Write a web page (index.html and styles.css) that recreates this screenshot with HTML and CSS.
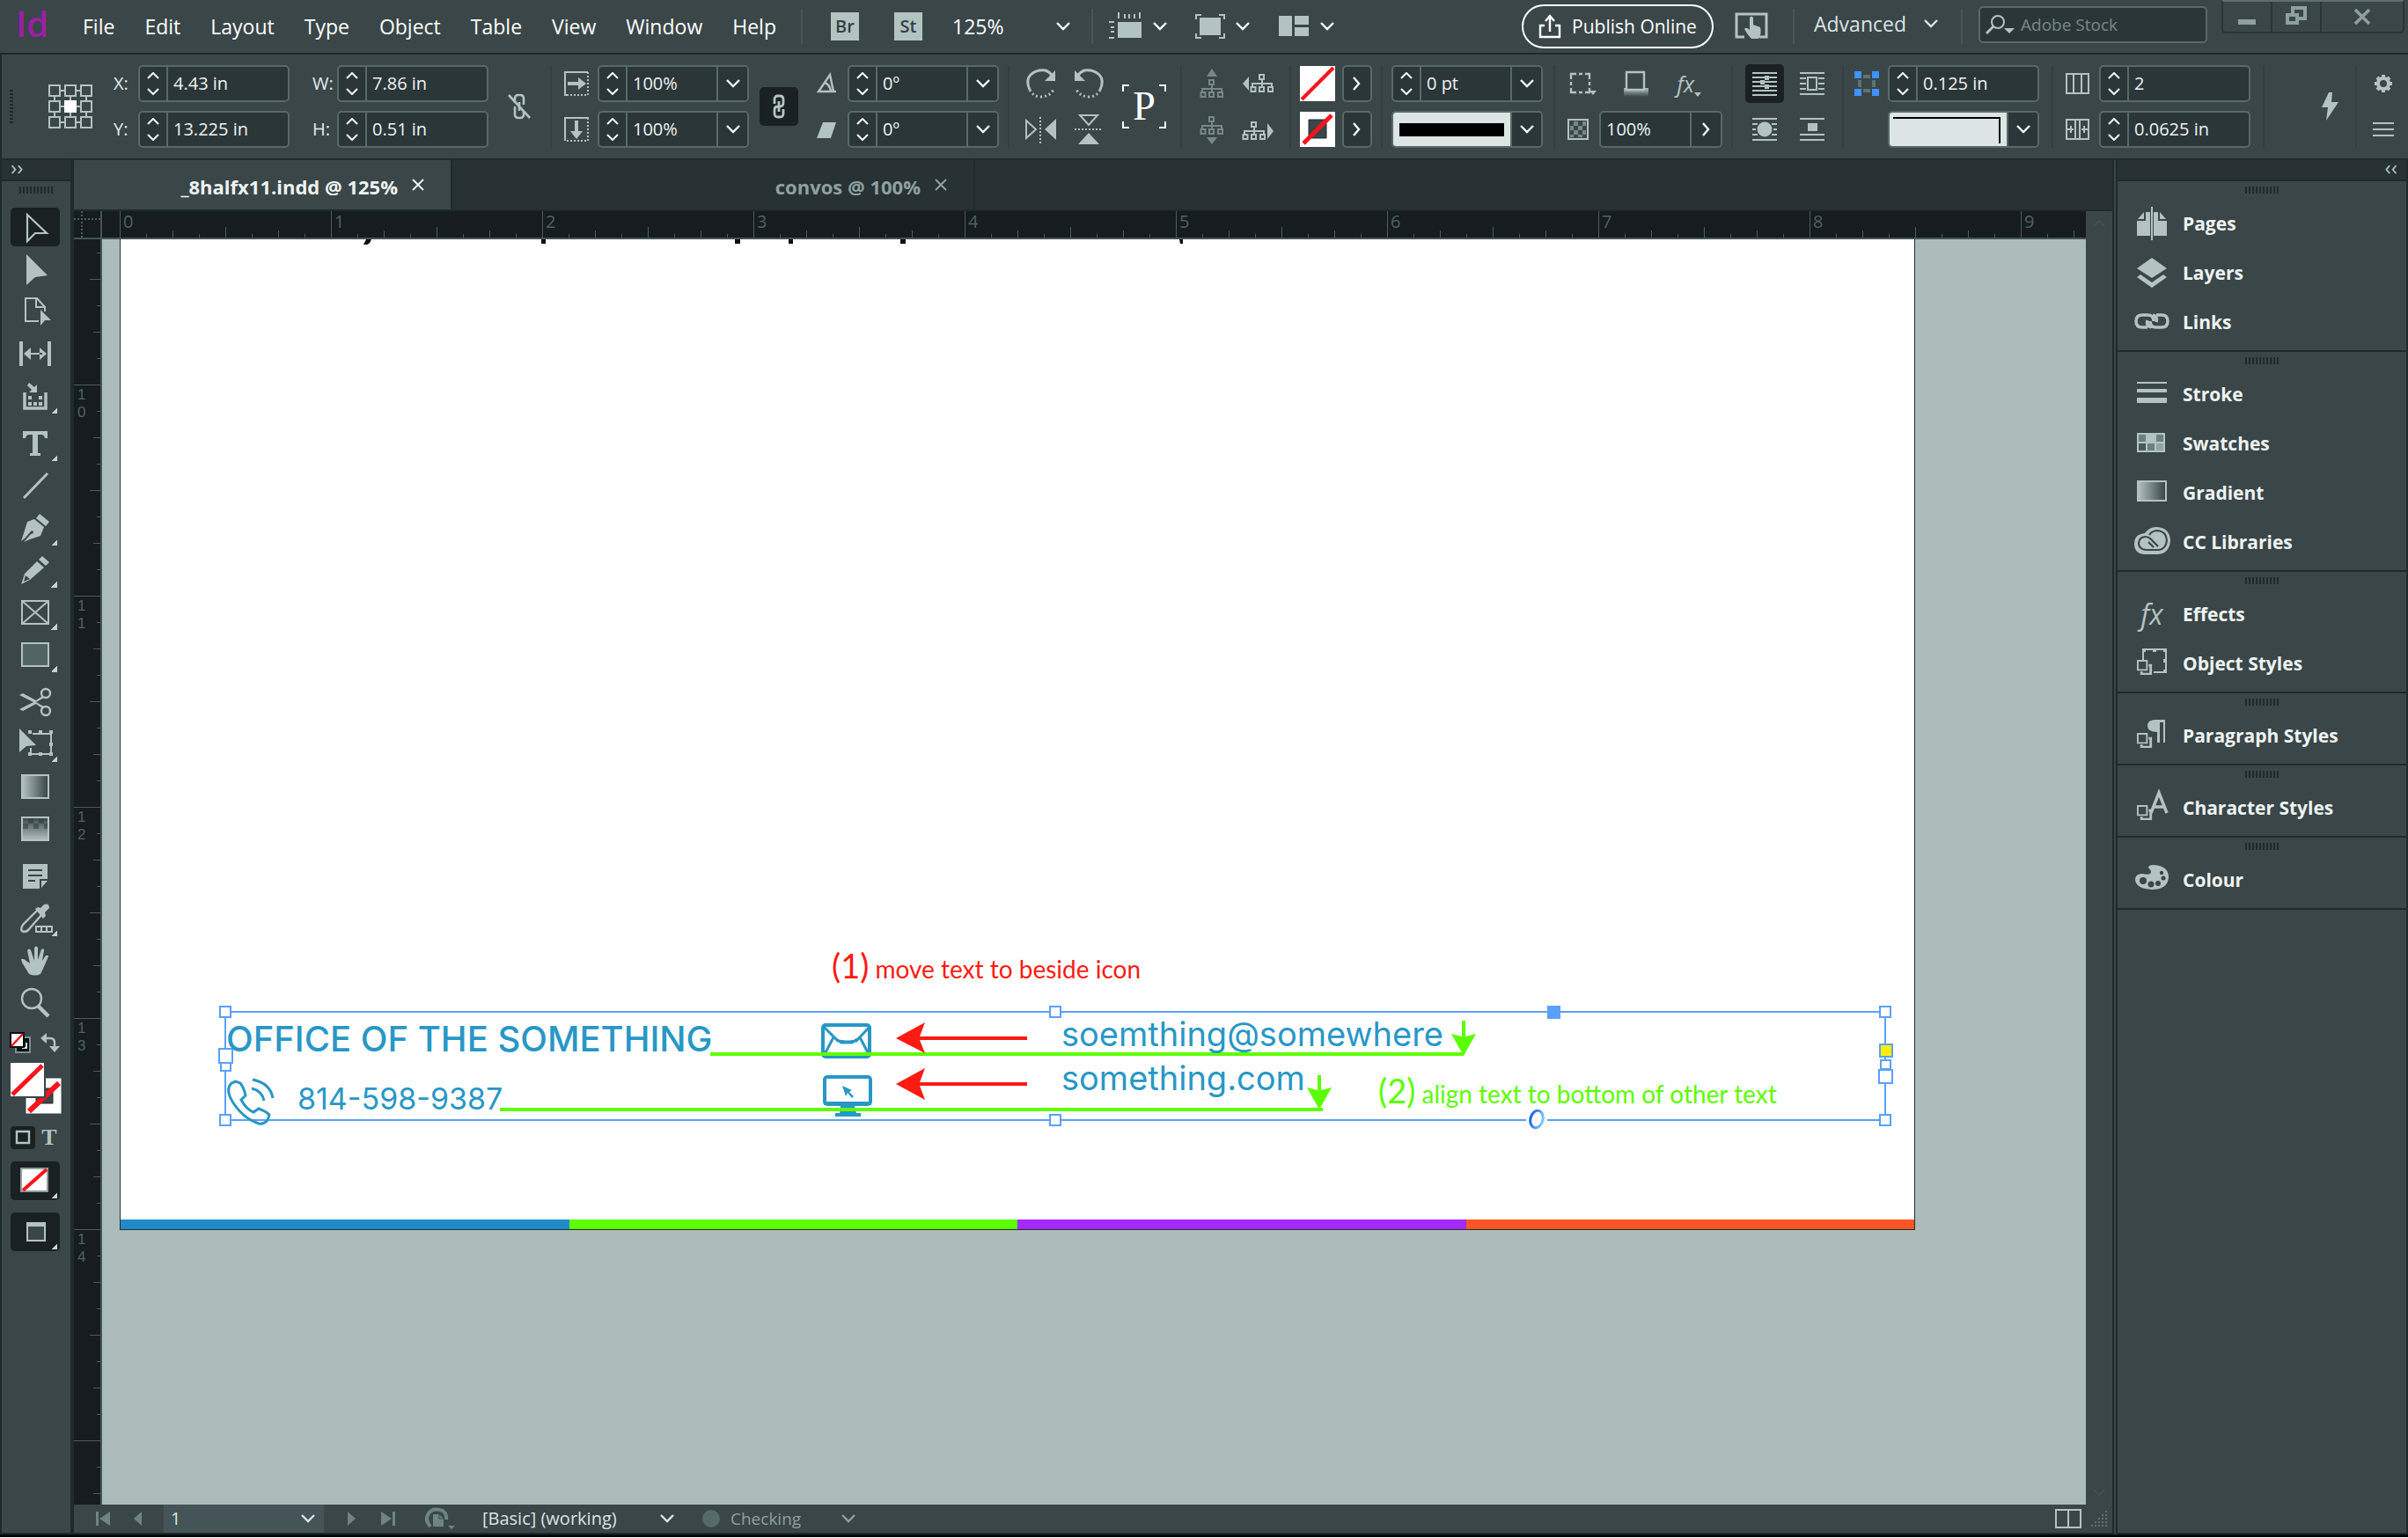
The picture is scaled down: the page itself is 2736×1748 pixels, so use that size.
FILE: index.html
```html
<!DOCTYPE html>
<html lang="en">
<head>
<meta charset="utf-8">
<title>_8halfx11.indd @ 125%</title>
<link rel="stylesheet" href="styles.css">
</head>
<body>
<svg class="defs" aria-hidden="true">
  <defs>
    <symbol id="up" viewBox="0 0 14 8"><path d="M1 7l6-6 6 6" fill="none" stroke="currentColor" stroke-width="2"/></symbol>
    <symbol id="down" viewBox="0 0 14 8"><path d="M1 1l6 6 6-6" fill="none" stroke="currentColor" stroke-width="2"/></symbol>
    <symbol id="chev" viewBox="0 0 16 10"><path d="M1 1l7 7 7-7" fill="none" stroke="currentColor" stroke-width="2.4"/></symbol>
    <symbol id="right" viewBox="0 0 10 16"><path d="M1 1l6 7-6 7" fill="none" stroke="currentColor" stroke-width="2.4"/></symbol>
    <symbol id="styles" viewBox="0 0 20 20"><path d="M1 1h11v11H1z" fill="none" stroke="currentColor" stroke-width="2"/><path d="M14 5h4v13H4v-4h3v1.500h8V8h-1z" fill="currentColor"/></symbol>
    <symbol id="tree" viewBox="0 0 28 22"><path d="M14 6v4M14 10v5M3 15v-4h22v4" fill="none" stroke="currentColor" stroke-width="2"/><path d="M11 1h5v5h-5zM1.500 15h5v5h-5zM11 15h5v5h-5zM21 15h5v5h-5z" fill="none" stroke="currentColor" stroke-width="2"/></symbol>
    <linearGradient id="fade"><stop offset="0" stop-color="#b3c3c1"/><stop offset="1" stop-color="#364345"/></linearGradient>
    <linearGradient id="fadeDown" x2="0" y2="1"><stop offset="0" stop-color="#3a4648"/><stop offset="1" stop-color="#b3c3c1"/></linearGradient>
    <linearGradient id="shadow" x2="0" y2="1"><stop offset="0" stop-color="#b3c3c1"/><stop offset="1" stop-color="#3a4648"/></linearGradient>
    <linearGradient id="ring"><stop offset="0" stop-color="#1b62f0"/><stop offset="1" stop-color="#7cc4fb"/></linearGradient>
  </defs>
</svg>

<header class="menubar">
  <span class="logo">Id</span>
  <nav class="menus">
    <button>File</button><button>Edit</button><button>Layout</button><button>Type</button><button>Object</button><button>Table</button><button>View</button><button>Window</button><button>Help</button>
  </nav>
  <i class="rule m-rule1"></i>
  <button class="badge">Br</button>
  <button class="badge">St</button>
  <button class="zoom"><span>125%</span><svg width="16" height="10"><use href="#chev"/></svg></button>
  <i class="rule m-rule2"></i>
  <div class="views">
    <button aria-label="View options"><svg width="38" height="32" viewBox="0 0 38 32"><path d="M11 0v7M18 2v5M23 2v5M29 2v5M35 0v7M0 11h6M2 17h4M2 22h4M0 29h6" stroke="currentColor" stroke-width="2"/><path d="M10 11h27v18H10z" fill="currentColor"/></svg><svg width="16" height="10"><use href="#chev"/></svg></button>
    <button aria-label="Screen mode"><svg width="34" height="32" viewBox="0 0 34 32"><path d="M1 8V3h6M27 3h6v5M33 24v5h-6M7 29H1v-5" fill="none" stroke="currentColor" stroke-width="2"/><path d="M5 6h24v20H5z" fill="currentColor"/></svg><svg width="16" height="10"><use href="#chev"/></svg></button>
    <button aria-label="Arrange documents"><svg width="36" height="32" viewBox="0 0 36 32"><path d="M1 4h15v23H1zM19 4h16v10H19zM19 17h16v10H19z" fill="currentColor"/></svg><svg width="16" height="10"><use href="#chev"/></svg></button>
  </div>
  <div class="right-tools">
    <button class="publish"><svg width="26" height="28" viewBox="0 0 26 28"><path d="M7 13H2v13h22V13h-5M13 20V4M8 8l5-6 5 6" fill="none" stroke="currentColor" stroke-width="2.400"/></svg>Publish Online</button>
    <button class="touch" aria-label="Touch workspace"><svg width="38" height="32" viewBox="0 0 38 32"><path d="M11 28H2V2h34v26h-8" fill="none" stroke="currentColor" stroke-width="3"/><path d="M17 18V6q2-3 4 0v8l8 3q2 7-2 13h-8q-5-5-8-11 2-3 6 1z" fill="currentColor"/></svg></button>
    <i class="rule"></i>
    <button class="workspace-pick">Advanced<svg width="16" height="10"><use href="#chev"/></svg></button>
    <i class="rule"></i>
    <label class="search"><svg width="34" height="24" viewBox="0 0 34 24"><circle cx="14" cy="9" r="7" fill="none" stroke="currentColor" stroke-width="2"/><path d="M9 14l-8 8" stroke="currentColor" stroke-width="3"/><path d="M21 16h12l-6 6z" fill="currentColor"/></svg><input type="text" placeholder="Adobe Stock" aria-label="Adobe Stock"></label>
    <div class="win">
      <button aria-label="Minimise"><svg width="20" height="24"><path d="M0 15h20v6H0z" fill="currentColor"/></svg></button>
      <button aria-label="Restore"><svg width="26" height="24" viewBox="0 0 26 24"><path d="M9 8V2h14v12h-7" fill="none" stroke="currentColor" stroke-width="4"/><path d="M3 10h11v9H3z" fill="none" stroke="currentColor" stroke-width="4"/></svg></button>
      <button aria-label="Close"><svg width="20" height="20" viewBox="0 0 20 20"><path d="M2 2l16 16M18 2L2 18" stroke="currentColor" stroke-width="3.500"/></svg></button>
    </div>
  </div>
</header>

<section class="control">
  <i class="vgrip"></i>
  <svg class="refpoint" width="50" height="50" viewBox="0 0 50 50"><path d="M14 7h4M32 7h4M14 25h4M32 25h4M14 43h4M32 43h4M7 14v4M7 32v4M25 14v4M25 32v4M43 14v4M43 32v4" stroke="#b3c3c1" stroke-width="2"/><path d="M1 1h12v12H1zM19 1h12v12H19zM37 1h12v12H37zM1 19h12v12H1zM37 19h12v12H37zM1 37h12v12H1zM19 37h12v12H19zM37 37h12v12H37z" fill="none" stroke="#b3c3c1" stroke-width="2"/><path d="M18 18h14v14H18z" fill="#fff"/></svg>
  <div class="pair ml24">
    <div class="line"><label for="fx">X:</label><div class="field"><span class="spin"><button aria-label="Increase X"><svg><use href="#up"/></svg></button><button aria-label="Decrease X"><svg><use href="#down"/></svg></button></span><input id="fx" value="4.43 in"></div></div>
    <div class="line"><label for="fy">Y:</label><div class="field"><span class="spin"><button aria-label="Increase Y"><svg><use href="#up"/></svg></button><button aria-label="Decrease Y"><svg><use href="#down"/></svg></button></span><input id="fy" value="13.225 in"></div></div>
  </div>
  <div class="pair ml26">
    <div class="line"><label for="fw">W:</label><div class="field"><span class="spin"><button aria-label="Increase W"><svg><use href="#up"/></svg></button><button aria-label="Decrease W"><svg><use href="#down"/></svg></button></span><input id="fw" value="7.86 in"></div></div>
    <div class="line"><label for="fh">H:</label><div class="field"><span class="spin"><button aria-label="Increase H"><svg><use href="#up"/></svg></button><button aria-label="Decrease H"><svg><use href="#down"/></svg></button></span><input id="fh" value="0.51 in"></div></div>
  </div>
  <button class="ml22" aria-label="Constrain proportions"><svg width="26" height="30" viewBox="0 0 26 30"><path d="M8 11V6q0-4 4-4h2q4 0 4 4v7M8 15v9q0 4 4 4h2q4 0 4-4v-3M13 10v10" fill="none" stroke="currentColor" stroke-width="2.600"/><path d="M1 2l24 26" stroke="currentColor" stroke-width="2.600"/></svg></button>
  <i class="rule ml22"></i>
  <div class="pair ml14">
    <div class="line"><svg width="28" height="28" viewBox="0 0 28 28"><path d="M27 1H1v26h2" fill="none" stroke="currentColor" stroke-width="2"/><path d="M27 1v26H1" fill="none" stroke="currentColor" stroke-width="2" stroke-dasharray="2 2"/><path d="M4 12h12V7l9 7-9 7v-5H4z" fill="currentColor"/></svg><div class="field"><span class="spin"><button aria-label="Increase X scale"><svg><use href="#up"/></svg></button><button aria-label="Decrease X scale"><svg><use href="#down"/></svg></button></span><input aria-label="X scale" value="100%"><button class="drop" aria-label="X scale presets"><svg><use href="#chev"/></svg></button></div></div>
    <div class="line"><svg width="28" height="28" viewBox="0 0 28 28"><path d="M1 27V1h26v2" fill="none" stroke="currentColor" stroke-width="2"/><path d="M27 1v26H1" fill="none" stroke="currentColor" stroke-width="2" stroke-dasharray="2 2"/><path d="M12 4v12H7l7 9 7-9h-5V4z" fill="currentColor"/></svg><div class="field"><span class="spin"><button aria-label="Increase Y scale"><svg><use href="#up"/></svg></button><button aria-label="Decrease Y scale"><svg><use href="#down"/></svg></button></span><input aria-label="Y scale" value="100%"><button class="drop" aria-label="Y scale presets"><svg><use href="#chev"/></svg></button></div></div>
  </div>
  <button class="pressed ml12" aria-label="Link scaling"><svg width="14" height="28" viewBox="0 0 14 28"><path d="M2 11V6q0-4 4-4h2q4 0 4 4v4q0 4-4 4H7M12 17v5q0 4-4 4H6q-4 0-4-4v-4q0-4 4-4h1M7 8v12" fill="none" stroke="currentColor" stroke-width="2.800"/></svg></button>
  <div class="pair ml18">
    <div class="line"><svg width="28" height="28" viewBox="0 0 28 28"><path d="M25 23H5L18 4l4 19M12 13q6 2 7 10" fill="none" stroke="currentColor" stroke-width="2.400"/></svg><div class="field"><span class="spin"><button aria-label="Increase rotation"><svg><use href="#up"/></svg></button><button aria-label="Decrease rotation"><svg><use href="#down"/></svg></button></span><input aria-label="Rotation" value="0º"><button class="drop" aria-label="Rotation presets"><svg><use href="#chev"/></svg></button></div></div>
    <div class="line"><svg width="28" height="28" viewBox="0 0 28 28"><path d="M10 6h15l-6 18H3z" fill="currentColor"/></svg><div class="field"><span class="spin"><button aria-label="Increase shear"><svg><use href="#up"/></svg></button><button aria-label="Decrease shear"><svg><use href="#down"/></svg></button></span><input aria-label="Shear" value="0º"><button class="drop" aria-label="Shear presets"><svg><use href="#chev"/></svg></button></div></div>
  </div>
  <i class="rule ml10"></i>
  <div class="quad ml18">
    <button aria-label="Rotate clockwise"><svg width="36" height="36" viewBox="0 0 36 36"><path d="M5 25Q0 14 6 8t17-5q5 2 7 6" fill="none" stroke="currentColor" stroke-width="3"/><path d="M34 3v12H22z" fill="currentColor"/><path d="M5 25q4 8 13 8t14-8" fill="none" stroke="currentColor" stroke-width="3" stroke-dasharray="2 3"/></svg></button>
    <button aria-label="Rotate anticlockwise"><svg width="36" height="36" viewBox="0 0 36 36"><path d="M31 25q5-11-1-17T13 3q-5 2-7 6" fill="none" stroke="currentColor" stroke-width="3"/><path d="M2 3v12h12z" fill="currentColor"/><path d="M31 25q-4 8-13 8T4 25" fill="none" stroke="currentColor" stroke-width="3" stroke-dasharray="2 3"/></svg></button>
    <button aria-label="Flip horizontal"><svg width="36" height="36" viewBox="0 0 36 36"><path d="M1 8v20l11-10z" fill="none" stroke="currentColor" stroke-width="2"/><path d="M35 6v24L22 18z" fill="currentColor"/><path d="M17 4v30" stroke="currentColor" stroke-width="2" stroke-dasharray="2 2"/></svg></button>
    <button aria-label="Flip vertical"><svg width="36" height="36" viewBox="0 0 36 36"><path d="M8 2h20L18 13z" fill="none" stroke="currentColor" stroke-width="2"/><path d="M6 35h24L18 22z" fill="currentColor"/><path d="M2 18h32" stroke="currentColor" stroke-width="2" stroke-dasharray="2 2"/></svg></button>
  </div>
  <div class="bigp ml20">P</div>
  <i class="rule ml16"></i>
  <div class="quad tight ml16">
    <button class="dim" aria-label="Select container"><svg width="36" height="36" viewBox="0 0 36 36"><path d="M18 1l6 9H12z" fill="currentColor"/><use href="#tree" x="4" y="13" width="28" height="22"/></svg></button>
    <button aria-label="Select previous object"><svg width="36" height="36" viewBox="0 0 36 36"><path d="M8 10v16l-7-8z" fill="currentColor"/><use href="#tree" x="9" y="7" width="28" height="22"/></svg></button>
    <button class="dim" aria-label="Select content"><svg width="36" height="36" viewBox="0 0 36 36"><path d="M18 35l6-8H12z" fill="currentColor"/><use href="#tree" x="4" y="3" width="28" height="22"/></svg></button>
    <button aria-label="Select next object"><svg width="36" height="36" viewBox="0 0 36 36"><path d="M29 11v18l7-9z" fill="currentColor"/><use href="#tree" x="0" y="9" width="28" height="22"/></svg></button>
  </div>
  <i class="rule ml18"></i>
  <div class="pair ml10">
    <div class="line g8"><svg width="40" height="40"><path d="M0 0h40v40H0z" fill="#fff"/><path d="M2 38L38 2" stroke="#f8141c" stroke-width="4"/></svg><button class="more" aria-label="Fill options"><svg width="10" height="16"><use href="#right"/></svg></button></div>
    <div class="line g8"><svg width="40" height="40"><path d="M0 0h40v40H0z" fill="#fff"/><path d="M10 9h20v21H10z" fill="#3a4648" stroke="#222c2e"/><path d="M4 36L36 4" stroke="#f8141c" stroke-width="5"/></svg><button class="more" aria-label="Stroke options"><svg width="10" height="16"><use href="#right"/></svg></button></div>
  </div>
  <i class="rule ml10"></i>
  <div class="pair ml10">
    <div class="field"><span class="spin"><button aria-label="Increase stroke weight"><svg><use href="#up"/></svg></button><button aria-label="Decrease stroke weight"><svg><use href="#down"/></svg></button></span><input aria-label="Stroke weight" value="0 pt"><button class="drop" aria-label="Stroke weight presets"><svg><use href="#chev"/></svg></button></div>
    <div class="field"><span class="sample"><i class="sample-line"></i></span><button class="drop" aria-label="Stroke type"><svg><use href="#chev"/></svg></button></div>
  </div>
  <i class="rule ml12"></i>
  <div class="pair effects ml14">
    <div class="fxrow">
      <button aria-label="Corner options"><svg width="32" height="28" viewBox="0 0 32 28"><path d="M4 9V3h21v21H4z" fill="none" stroke="currentColor" stroke-width="2.400"/><path d="M10 3h3M17 3h3M25 9v3M25 16v3M10 24h3M17 24h3M4 9v3M4 16v3" stroke="#3a4648" stroke-width="3"/><path d="M25 22h8l-4 5z" fill="currentColor"/></svg></button>
      <button aria-label="Drop shadow"><svg width="28" height="30" viewBox="0 0 28 30"><path d="M0 20h28v10H0z" fill="url(#shadow)"/><path d="M3 2h20v20H3z" fill="#3a4648" stroke="currentColor" stroke-width="2.400"/></svg></button>
      <button class="fx" aria-label="Effects"><i>fx</i><svg width="8" height="5"><path d="M0 0h8l-4 5z" fill="currentColor"/></svg></button>
    </div>
    <div class="line g12"><svg width="24" height="24" viewBox="0 0 24 24"><path d="M1 1h22v22H1z" fill="none" stroke="currentColor" stroke-width="2"/><path d="M7 3h5v5H7zM17 3h4v5h-4zM3 8h4v5H3zM12 8h5v5h-5zM7 13h5v5H7zM17 13h4v5h-4zM12 18h5v3h-5zM3 18h4v3H3z" fill="#76898a"/></svg><div class="field opacity"><input aria-label="Opacity" value="100%"><button class="drop" aria-label="Opacity slider"><svg class="r"><use href="#right"/></svg></button></div></div>
  </div>
  <i class="rule ml10"></i>
  <div class="wraps ml14">
    <button class="pressed" aria-label="No text wrap"><svg width="28" height="28" viewBox="0 0 28 28"><path d="M0 2h28M0 7h28M0 12h28M0 17h28M0 22h28M0 27h28" stroke="currentColor" stroke-width="2"/><path d="M9 10h5v5H9zM14 5h5v5h-5zM14 15h5v5h-5z" fill="currentColor"/></svg></button>
    <button aria-label="Wrap around bounding box"><svg width="28" height="28" viewBox="0 0 28 28"><path d="M0 2h28M0 8h7M21 8h7M0 14h7M21 14h7M0 20h7M21 20h7M0 26h28M9 7h10v14H9z" fill="none" stroke="currentColor" stroke-width="2"/></svg></button>
    <button aria-label="Wrap around object shape"><svg width="28" height="28" viewBox="0 0 28 28"><path d="M0 2h28M0 8h6M22 8h6M0 14h4M24 14h4M0 20h6M22 20h6M0 26h28" stroke="currentColor" stroke-width="2"/><circle cx="14" cy="14" r="8.500" fill="currentColor"/></svg></button>
    <button aria-label="Jump object"><svg width="28" height="28" viewBox="0 0 28 28"><path d="M0 2h28M0 20h28M0 26h28" stroke="currentColor" stroke-width="2"/><path d="M9 7h11v9H9z" fill="currentColor"/></svg></button>
  </div>
  <i class="rule ml12"></i>
  <div class="pair ml12">
    <div class="line"><svg width="28" height="28" viewBox="0 0 28 28"><path d="M0 0h8v8H0zM20 0h8v8h-8zM0 20h8v8H0zM20 20h8v8h-8z" fill="#3f92ff"/><path d="M10 4h8v4h-8zM10 20h8v4h-8zM4 10h4v8H4zM20 10h4v8h-4z" fill="#5f7172"/></svg><div class="field"><span class="spin"><button aria-label="Increase corner size"><svg><use href="#up"/></svg></button><button aria-label="Decrease corner size"><svg><use href="#down"/></svg></button></span><input aria-label="Corner size" value="0.125 in"></div></div>
    <div class="line"><span class="gap28"></span><div class="field"><span class="sample"><i class="sample-corner"></i></span><button class="drop" aria-label="Corner shape"><svg><use href="#chev"/></svg></button></div></div>
  </div>
  <i class="rule ml14"></i>
  <div class="pair ml14">
    <div class="line"><svg width="28" height="28" viewBox="0 0 28 28"><path d="M1 3h25v22H1zM9 3v22M18 3v22" fill="none" stroke="currentColor" stroke-width="2"/></svg><div class="field"><span class="spin"><button aria-label="Increase columns"><svg><use href="#up"/></svg></button><button aria-label="Decrease columns"><svg><use href="#down"/></svg></button></span><input aria-label="Columns" value="2"></div></div>
    <div class="line"><svg width="28" height="28" viewBox="0 0 28 28"><path d="M1 3h25v22H1zM11 3v22M16 3v22M2 14h7M25 14h-7M6 10v8M21 10v8" fill="none" stroke="currentColor" stroke-width="2"/></svg><div class="field"><span class="spin"><button aria-label="Increase gutter"><svg><use href="#up"/></svg></button><button aria-label="Decrease gutter"><svg><use href="#down"/></svg></button></span><input aria-label="Gutter" value="0.0625 in"></div></div>
  </div>
  <i class="rule ml14"></i>
  <div class="ctl-right">
    <button aria-label="Quick apply"><svg width="22" height="34" viewBox="0 0 22 34"><path d="M14 1h-4L2 18h7l-2 15L21 12h-8z" fill="currentColor"/></svg></button>
    <i class="rule"></i>
    <div class="ctl-menu">
      <button aria-label="Customise"><svg width="24" height="24" viewBox="0 0 24 24"><circle cx="12" cy="12" r="6" fill="none" stroke="currentColor" stroke-width="4"/><path d="M12 2v3M12 19v3M2 12h3M19 12h3M5 5l2 2M17 17l2 2M5 19l2-2M17 7l2-2" stroke="currentColor" stroke-width="4"/></svg></button>
      <button aria-label="Panel menu"><svg width="24" height="24" viewBox="0 0 24 24"><path d="M0 5h24M0 12h24M0 19h24" stroke="currentColor" stroke-width="2"/></svg></button>
    </div>
  </div>
</section>

<main class="workspace">
  <aside class="tools">
    <div class="dock-head left">››</div>
    <div class="hgrip"></div>
    <div class="toollist">
      <button class="tool on" aria-label="Selection"><svg><path d="M19 8v30l9-9h13z" fill="none" stroke="currentColor" stroke-width="2.200"/></svg></button>
      <button class="tool" aria-label="Direct selection"><svg><path d="M18 5v35l10-9 14-2z" fill="currentColor"/></svg></button>
      <button class="tool" aria-label="Page"><svg><path d="M32 33H17V7h13l9 10v5M29 7v10h10" fill="none" stroke="currentColor" stroke-width="2"/><path d="M34 20v18l5-6h7z" fill="currentColor"/></svg></button>
      <button class="tool" aria-label="Gap"><svg><path d="M12 8v28M44 8v28" stroke="currentColor" stroke-width="4"/><path d="M20 21h16v2H20zM15 22l8-7v14zM41 22l-8-7v14z" fill="currentColor"/></svg></button>
      <button class="tool sub" aria-label="Content collector"><svg><path d="M16 18v18h24V18" fill="none" stroke="currentColor" stroke-width="3.500"/><path d="M20 22h4v4h-4zM32 22h4v4h-4zM20 29h4v4h-4zM26 29h4v4h-4zM32 29h4v4h-4zM30 9v9h-9l3-3-5-5 2-3 6 5z" fill="currentColor"/></svg></button>
      <button class="tool sub brk" aria-label="Type"><svg><path d="M14 8h28v8h-3q-1-4-4-4h-4v21h3v3H22v-3h3V12h-4q-3 0-4 4h-3z" fill="currentColor"/></svg></button>
      <button class="tool" aria-label="Line"><svg><path d="M15 36L42 8" stroke="currentColor" stroke-width="3"/></svg></button>
      <button class="tool sub" aria-label="Pen"><svg><path d="M33 6l11 9-4 5-11-9z" fill="currentColor"/><path d="M27 12l11 9-4 10-12 4-7 3 8-9q3 0 3-3l-2-1-8 9-4 3 3-9 4-13z" fill="currentColor"/></svg></button>
      <button class="tool sub" aria-label="Pencil"><svg><path d="M36 6l8 7-4 4-8-7zM30 12l8 7-16 14-10 5 4-12z" fill="currentColor"/><path d="M17 28l5 4-7 3z" fill="#3a4648"/></svg></button>
      <button class="tool sub" aria-label="Rectangle frame"><svg><path d="M13 9h30v26H13zM13 9l30 26M43 9L13 35" fill="none" stroke="currentColor" stroke-width="2"/></svg></button>
      <button class="tool sub" aria-label="Rectangle"><svg><path d="M13 9h30v26H13z" fill="#536466" stroke="currentColor" stroke-width="2"/></svg></button>
      <button class="tool brk" aria-label="Scissors"><svg><circle cx="40" cy="12" r="5" fill="none" stroke="currentColor" stroke-width="2.400"/><circle cx="40" cy="32" r="5" fill="none" stroke="currentColor" stroke-width="2.400"/><path d="M36 15l-7 5L14 12l-4 2 16 8-16 8 4 2 15-8 7 5 2-2-9-5 9-5z" fill="currentColor"/></svg></button>
      <button class="tool sub" aria-label="Free transform"><svg><path d="M25 10h21v23H23V26" fill="none" stroke="currentColor" stroke-width="2"/><path d="M20 6h4v4h-4zM32 6h4v4h-4zM44 6h4v4h-4zM44 20h4v4h-4zM44 31h4v4h-4zM32 31h4v4h-4zM20 31h4v4h-4zM10 4v27l8-7 11-1z" fill="currentColor"/></svg></button>
      <button class="tool" aria-label="Gradient swatch"><svg><path d="M13 9h30v26H13z" fill="url(#fade)" stroke="currentColor" stroke-width="2"/></svg></button>
      <button class="tool" aria-label="Gradient feather"><svg><path d="M13 9h30v26H13z" fill="url(#fadeDown)" stroke="currentColor" stroke-width="2"/><path d="M20 10h6v6h-6zM32 10h6v6h-6zM14 16h6v6h-6zM26 16h6v6h-6zM38 16h4v6h-4z" fill="#2b3638" opacity=".5"/></svg></button>
      <button class="tool brk" aria-label="Note"><svg><path d="M14 8h28v17h-9v11H14zM35 27h7l-7 8z" fill="currentColor"/><path d="M20 15h16M20 21h16M20 27h8" stroke="#3a4648" stroke-width="2"/></svg></button>
      <button class="tool sub" aria-label="Eyedropper"><svg><path d="M31 12L14 29q-4 7 1 8 4 0 6-3l14-16" fill="none" stroke="currentColor" stroke-width="2.400"/><path d="M28 11l3-2 3 1 4-4q6-2 6 4l-5 5 1 4-3 3z" fill="currentColor"/><path d="M29 31h18v6H29zM35 31v6M41 31v6" fill="#3a4648" stroke="currentColor" stroke-width="2"/></svg></button>
      <button class="tool" aria-label="Hand"><svg><path d="M21 37l-8-13-1-4 3 0 7 5-3-15q2-3 4 0l4 12V7q2-3 4 0v14l4-12q3-2 3 1l-2 12 4-6q3-1 3 1l-6 14-3 6q-6 3-13 0z" fill="currentColor"/></svg></button>
      <button class="tool" aria-label="Zoom"><svg><ellipse cx="24" cy="17" rx="11" ry="11" fill="none" stroke="currentColor" stroke-width="2.400"/><path d="M31 25l12 12" stroke="currentColor" stroke-width="4.500"/></svg></button>
    </div>
    <div class="mini">
      <button aria-label="Default fill and stroke"><svg width="26" height="26" viewBox="0 0 26 26"><path d="M8 7h16v17H8z" fill="#0b0f10" stroke="#7e908f" stroke-width="2"/><path d="M15 19h5v-6" fill="none" stroke="#dce5e3" stroke-width="2"/><path d="M2 2h15v16H2z" fill="#fff" stroke="#0b0f10" stroke-width="2"/><path d="M3 17L16 3" stroke="#f8141c" stroke-width="2.500"/></svg></button>
      <button aria-label="Swap fill and stroke"><svg width="22" height="24" viewBox="0 0 22 24"><path d="M5 7h6q5 0 5 5v6" fill="none" stroke="currentColor" stroke-width="2.400"/><path d="M0 7l7-6v12zM10 16h12l-6 7z" fill="currentColor"/></svg></button>
    </div>
    <svg class="fillstroke" width="60" height="60" viewBox="0 0 60 60"><path d="M18 18h41v41H18z" fill="#fff" stroke="#3a4648"/><path d="M20 20h37v37H20z" fill="#fff" stroke="#fff"/><path d="M30 30h19v17H30z" fill="#3a4648" stroke="#222c2e"/><path d="M22 56l34-32" stroke="#f8141c" stroke-width="6"/><path d="M0 0h40v40H0z" fill="#fff" stroke="#3a4648" stroke-width="2"/><path d="M3 37L37 4" stroke="#f8141c" stroke-width="5"/></svg>
    <div class="format">
      <button class="on" aria-label="Formatting affects container"><svg width="18" height="18"><path d="M2 2h14v13H2z" fill="none" stroke="currentColor" stroke-width="2.400"/></svg></button>
      <button class="serif" aria-label="Formatting affects text">T</button>
    </div>
    <button class="tool on sub" aria-label="Apply none"><svg><path d="M12 8h30v26H12z" fill="#fff" stroke="#8fa09f" stroke-width="2"/><path d="M14 33L41 9" stroke="#f8141c" stroke-width="4"/></svg></button>
    <button class="tool on sub view" aria-label="Screen mode"><svg><path d="M19 12h20v20H19z" fill="#3a4648" stroke="currentColor" stroke-width="2"/><path d="M18 11h22v5H18z" fill="currentColor"/></svg></button>
  </aside>

  <section class="document">
    <div class="tabs">
      <div class="tab active"><span>_8halfx11.indd @ 125%</span><button aria-label="Close tab"><svg width="14" height="14" viewBox="0 0 14 14"><path d="M1 1l12 12M13 1L1 13" stroke="currentColor" stroke-width="2"/></svg></button></div>
      <div class="tab second"><span>convos @ 100%</span><button aria-label="Close tab"><svg width="14" height="14" viewBox="0 0 14 14"><path d="M1 1l12 12M13 1L1 13" stroke="currentColor" stroke-width="2"/></svg></button></div>
    </div>
    <div class="stage">
      <div class="corner"></div>
      <div class="hruler"><span>0</span><span>1</span><span>2</span><span>3</span><span>4</span><span>5</span><span>6</span><span>7</span><span>8</span><span>9</span></div>
      <div class="vruler"><span>1<br>0</span><span>1<br>1</span><span>1<br>2</span><span>1<br>3</span><span>1<br>4</span></div>
      <div class="pasteboard">
        <article class="page">
          <svg class="art" width="2040" height="1126" viewBox="136 272 2040 1126">
            <path d="M416 272h6q-2 6-6 6h-3zM615 272h5v5h-5zM835 272h6v5h-6zM896 272h5v5h-5zM1023 272h6v5h-6zM1340 272h4v5h-3z" fill="#101010"/>
            <path d="M256 1150H2142V1273H256z" fill="none" stroke="#5aa0ff" stroke-width="2"/>
            <g fill="none" stroke="#2897c6" stroke-width="4">
              <rect x="935" y="1165" width="53" height="36" rx="3"/><path d="M936 1167l16 16 9 1h4l8-1 15-16M936 1200l11-21M988 1200l-11-21M950 1181l6 4h12l6-4" stroke-width="3"/>
              <rect x="937" y="1224" width="52" height="31" rx="3"/>
              <path d="M268 1229l-5 2q-8 8 3 24 12 17 28 22 6 1 10-4l2-6q-4-4-12-7l-6 4q-8-3-14-14l5-5q-2-9-6-14z" stroke-width="3"/><path d="M287 1227q20 4 23 21M286 1237q12 3 14 14" stroke-width="3"/>
            </g>
            <path d="M936 1252h54v4h-54zM955 1257h16l2 8h5v4h-29v-4h5zM957 1234l11 5-3 2 5 5-2 2-5-6-2 4z" fill="#2897c6"/>
            <path d="M807 1198h856M568 1261h935" stroke="#5cff00" stroke-width="4"/>
            <path d="M1661 1160h4v18l12-3-14 25-14-25 12 3zM1497 1222h4v17l12-3-14 25-14-25 12 3z" fill="#5cff00"/>
            <path d="M1018 1180l33-18-6 16h122v4h-122l6 15zM1018 1232l33-18-6 16h122v4h-122l6 16z" fill="#ff1a12"/>
            <g fill="#fff" stroke="#5aa0ff" stroke-width="2">
              <path d="M250 1144h12v12h-12zM1193 1144h12v12h-12zM2136 1144h12v12h-12zM250 1267h12v12h-12zM1193 1267h12v12h-12zM2136 1267h12v12h-12zM249 1192h15v16h-15zM251 1208h11v9h-11zM2137 1205h11v10h-11zM2135 1216h15v15h-15z"/>
              <path d="M2136 1187h14v14h-14z" fill="#fdee00"/>
            </g>
            <path d="M1758 1143h15v15h-15z" fill="#5aa0ff"/>
            <path d="M1734 1268h24v10h-24z" fill="#fff"/>
            <ellipse cx="1746" cy="1272" rx="7" ry="10" transform="rotate(15 1746 1272)" fill="#fff" stroke="url(#ring)" stroke-width="3"/>
          </svg>
          <p class="note n1"><b>(1)</b> move text to beside icon</p>
          <p class="copy title">OFFICE OF THE SOMETHING</p>
          <p class="copy phone">814-598-9387</p>
          <p class="copy mail">soemthing@somewhere</p>
          <p class="copy site">something.com</p>
          <p class="note n2"><b>(2)</b> align text to bottom of other text</p>
          <div class="stripe"><i class="c1"></i><i class="c2"></i><i class="c3"></i><i class="c4"></i></div>
        </article>
      </div>
      <div class="scroll"><svg width="14" height="8"><use href="#up"/></svg><svg width="14" height="8"><use href="#down"/></svg></div>
    </div>
    <footer class="status">
      <button class="first" aria-label="First page"><svg width="18" height="18"><path d="M1 1h3v16H1zM17 1v16L5 9z" fill="currentColor"/></svg></button>
      <button class="prev" aria-label="Previous page"><svg width="10" height="18"><path d="M9 1v16L0 9z" fill="currentColor"/></svg></button>
      <button class="pageno"><span>1</span><svg width="16" height="10"><use href="#chev"/></svg></button>
      <button class="next" aria-label="Next page"><svg width="10" height="18"><path d="M1 1v16l9-8z" fill="currentColor"/></svg></button>
      <button class="last" aria-label="Last page"><svg width="18" height="18"><path d="M14 1h3v16h-3zM1 1v16l12-8z" fill="currentColor"/></svg></button>
      <button class="open" aria-label="Open options"><svg width="36" height="26" viewBox="0 0 36 26"><path d="M7 22Q0 14 5 7t16-3q5 4 4 10" fill="none" stroke="currentColor" stroke-width="4"/><path d="M10 8h7l5 5v9H10z" fill="currentColor"/><path d="M17 8v5h5" fill="none" stroke="#3a4648"/><path d="M27 21h8l-4 4z" fill="currentColor"/></svg></button>
      <button class="preflight"><span>[Basic] (working)</span><svg width="16" height="10"><use href="#chev"/></svg></button>
      <button class="checking"><i></i><span>Checking</span><svg width="16" height="10"><use href="#chev"/></svg></button>
      <div class="status-end">
        <button aria-label="Split view"><svg width="32" height="22"><path d="M2 1h28v20H2zM16 1v20" fill="none" stroke="currentColor" stroke-width="2"/></svg></button>
        <svg width="20" height="20"><path d="M17 1v18M13 5v14M9 9v10M5 13v6M1 17v2" stroke="#5f7172" stroke-width="2" stroke-dasharray="2 2"/></svg>
      </div>
    </footer>
  </section>

  <aside class="panels">
    <div class="dock-head">‹‹</div>
    <div class="group">
      <div class="hgrip"></div>
      <button><svg viewBox="0 0 42 40"><path d="M4 34V17h10V7h5v27zM38 34V17H28V7h-5v27zM5 15l7-8v8zM37 15l-7-8v8zM20 1h2v38h-2z" fill="currentColor"/></svg>Pages</button>
      <button><svg viewBox="0 0 42 40"><path d="M21 3l17 12-17 11L4 15zM4 25l4-3 13 9 13-9 4 3-17 12z" fill="currentColor"/></svg>Layers</button>
      <button><svg viewBox="0 0 42 40"><path d="M16 26H10q-7 0-7-7t7-7h6q7 0 7 7M26 12h6q7 0 7 7t-7 7h-6q-7 0-7-7M22 12q6 2 4 8M20 26q-6-2-4-8" fill="none" stroke="currentColor" stroke-width="3.500"/></svg>Links</button>
    </div>
    <div class="group">
      <div class="hgrip"></div>
      <button><svg viewBox="0 0 42 40"><path d="M4 6h34v2H4zM4 14h34v4H4zM4 24h34v6H4z" fill="currentColor"/></svg>Stroke</button>
      <button><svg viewBox="0 0 42 40"><path d="M4 8h32v22H4z" fill="currentColor"/><path d="M6 10h8v8H6zM26 10h8v8h-8zM16 20h8v8h-8z" fill="#6d8081"/><path d="M6 20h8v8H6z" fill="#4a5a5c"/><path d="M26 20h8v8h-8z" fill="#93a4a3"/></svg>Swatches</button>
      <button><svg viewBox="0 0 42 40"><path d="M5 7h32v22H5z" fill="url(#fade)" stroke="currentColor" stroke-width="2"/></svg>Gradient</button>
      <button><svg viewBox="0 0 42 40"><path d="M12 34Q1 33 1 22T13 10q6-8 14-7 14 1 15 15-1 15-14 16z" fill="currentColor"/><path d="M30 29H14q-8-1-8-8 1-7 8-7 4 0 9 6l5 5M17 20l6 6M18 12q3-5 10-5 9 1 10 11-1 10-9 11" fill="none" stroke="#3a4648" stroke-width="2.200"/></svg>CC Libraries</button>
    </div>
    <div class="group">
      <div class="hgrip"></div>
      <button><span class="fxglyph">fx</span>Effects</button>
      <button><svg viewBox="0 0 42 40"><path d="M11 16V4h26v26H23" fill="none" stroke="currentColor" stroke-width="2"/><path d="M10 3h4v4h-4zM22 3h4v4h-4zM34 3h4v4h-4zM34 15h4v4h-4zM34 27h4v4h-4z" fill="currentColor"/><use href="#styles" x="4" y="16" width="19" height="19"/></svg>Object Styles</button>
    </div>
    <div class="group">
      <div class="hgrip"></div>
      <button><svg viewBox="0 0 42 40"><path d="M27 16q-11 0-11-7t9-7h11v26h-2V5h-4v23h-3z" fill="currentColor"/><use href="#styles" x="4" y="17" width="19" height="19"/></svg>Paragraph Styles</button>
    </div>
    <div class="group">
      <div class="hgrip"></div>
      <button><svg viewBox="0 0 42 40"><path d="M20 26L29 3l9 23M23 19h12" fill="none" stroke="currentColor" stroke-width="3.500"/><use href="#styles" x="4" y="17" width="19" height="19"/></svg>Character Styles</button>
    </div>
    <div class="group">
      <div class="hgrip"></div>
      <button><svg viewBox="0 0 42 40"><path d="M17 6q0-3 6-3 17 1 17 14-1 14-19 14Q3 30 2 20q0-7 8-7 10 2 10-2 0-2-3-5z" fill="currentColor"/><g fill="#3a4648"><circle cx="11" cy="21" r="4"/><circle cx="20" cy="25" r="3.500"/><circle cx="28" cy="24" r="3"/><circle cx="34" cy="18" r="2.500"/><circle cx="32" cy="12" r="2.200"/></g></svg>Colour</button>
    </div>
  </aside>
</main>
</body>
</html>
```
FILE: styles.css
```css
:root {
  --bar: #3a4648;
  --edge: #1f2a2c;
  --dark: #283234;
  --field: #2b3639;
  --line: #566a6a;
  --icon: #b3c3c1;
  --text: #eef3f2;
  --ruler: #161c1f;
  --tick: #4b5d60;
}

* { box-sizing: border-box; }

body {
  margin: 0;
  min-height: 100vh;
  display: flex;
  flex-direction: column;
  background: var(--bar);
  color: var(--text);
  font: 20px/24px "Open Sans", "Noto Sans", sans-serif;
  border-bottom: 1px solid #fff;
}

button, input { font: inherit; color: inherit; }
button { background: none; border: 0; padding: 0; margin: 0; color: var(--icon); display: flex; align-items: center; justify-content: center; flex: none; }
svg { display: block; flex: none; overflow: visible; color: inherit; }
.defs { position: absolute; width: 0; height: 0; }
p { margin: 0; }

.rule { width: 2px; background: #313d3f; align-self: stretch; flex: none; }
.ml10 { margin-left: 10px; } .ml12 { margin-left: 12px; } .ml14 { margin-left: 14px; }
.ml16 { margin-left: 16px; } .ml18 { margin-left: 18px; } .ml20 { margin-left: 20px; }
.ml22 { margin-left: 22px; } .ml24 { margin-left: 24px; } .ml26 { margin-left: 26px; }

/* menu bar */
.menubar { height: 62px; display: flex; align-items: center; border-bottom: 2px solid var(--edge); flex: none; font-size: 23px; }
.menubar .rule { height: 40px; align-self: center; background: #46565a; }
.logo { width: 74px; padding-left: 18px; font: 600 40px/50px "Open Sans", sans-serif; color: #9d1fa8; padding-bottom: 6px; }
.menus { display: flex; gap: 34px; padding-left: 20px; }
.menus button, .zoom, .publish { color: #fff; }
.menubar .m-rule1 { margin-left: 28px; }
.badge { width: 32px; height: 32px; background: var(--icon); color: #344144; font-weight: 600; font-size: 20px; margin-left: 32px; }
.badge + .badge { margin-left: 40px; }
.zoom { margin-left: 34px; width: 134px; justify-content: space-between; }
.menubar .m-rule2 { margin-left: 24px; }
.views { display: flex; margin-left: 18px; gap: 32px; }
.views button { gap: 12px; color: var(--icon); }
.views svg + svg, .zoom svg { color: #fff; }
.right-tools { margin-left: auto; display: flex; align-items: center; height: 60px; }
.publish { width: 218px; height: 50px; border: 2px solid #fff; border-radius: 25px; gap: 12px; font-size: 21px; }
.touch { margin: 0 28px 0 24px; }
.workspace-pick { color: #dbe4e3; gap: 20px; padding: 0 26px 6px 22px; }
.search { margin-left: 18px; width: 260px; height: 42px; border: 2px solid var(--line); border-radius: 5px; background: var(--field); display: flex; align-items: center; padding: 0 6px; gap: 6px; color: var(--icon); align-self: flex-start; margin-top: 7px; }
.search input { background: none; border: 0; padding: 0; min-width: 0; flex: 1; font-size: 19px; outline: 0; }
.search input::placeholder { color: #76898a; opacity: 1; }
.win { display: flex; align-self: flex-start; margin: 0 4px 0 16px; height: 38px; border: 2px solid #2a3537; border-top-color: #5b7070; border-radius: 0 0 5px 5px; }
.win button { width: 54px; color: #8ea09f; }
.win button + button { border-left: 2px solid #2a3537; width: 56px; }
.win button:last-child { width: 94px; }

/* control strip */
.control { height: 120px; display: flex; align-items: center; border-bottom: 2px solid var(--edge); border-left: 2px solid var(--edge); padding-left: 9px; flex: none; }
.control .rule { height: 94px; align-self: center; background: #324042; }
.vgrip { width: 4px; height: 38px; background: repeating-linear-gradient(var(--edge) 0 2px, transparent 2px 4px); }
.refpoint { margin-left: 40px; }
.pair { display: flex; flex-direction: column; gap: 10px; flex: none; }
.line { display: flex; align-items: center; gap: 10px; color: var(--icon); height: 42px; }
.line.g8 { gap: 8px; } .line.g12 { gap: 12px; }
.line label { width: 28px; margin-right: -10px; color: #e3eae9; }
.gap28 { width: 28px; }
.field { width: 172px; height: 42px; border: 2px solid var(--line); border-radius: 5px; background: var(--field); display: flex; overflow: hidden; color: var(--text); flex: none; }
.field.opacity { width: 140px; }
.spin { width: 32px; border-right: 2px solid var(--line); display: flex; flex-direction: column; justify-content: space-between; padding: 6px 0; flex: none; }
.spin button, .drop { color: #f4f8f8; }
.spin svg { width: 14px; height: 8px; }
.field input { flex: 1; min-width: 0; border: 0; background: none; padding: 0 0 0 6px; outline: 0; }
.drop { width: 35px; border-left: 2px solid var(--line); background: var(--field); }
.drop svg { width: 16px; height: 10px; }
.drop svg.r { width: 10px; height: 16px; }
.more { width: 34px; height: 42px; border: 2px solid var(--line); border-radius: 5px; background: var(--field); color: #f4f8f8; }
.pressed { width: 44px; height: 44px; background: #1a2123; border-radius: 5px; }
.quad { display: grid; grid-template-columns: 36px 36px; gap: 16px 18px; }
.quad.tight { column-gap: 16px; }
.dim { color: #76898a; }
.bigp { width: 50px; height: 50px; color: #fff; font: 46px/50px "Liberation Serif", serif; text-align: center;
  background:
    linear-gradient(#fff 0 0) 0 0 / 8px 2px, linear-gradient(#fff 0 0) 0 0 / 2px 8px,
    linear-gradient(#fff 0 0) 100% 0 / 8px 2px, linear-gradient(#fff 0 0) 100% 0 / 2px 8px,
    linear-gradient(#fff 0 0) 0 100% / 8px 2px, linear-gradient(#fff 0 0) 0 100% / 2px 8px,
    linear-gradient(#fff 0 0) 100% 100% / 8px 2px, linear-gradient(#fff 0 0) 100% 100% / 2px 8px;
  background-repeat: no-repeat; }
.sample { flex: 1; background: #dce5e3; padding: 12px 7px 0; }
.sample-line { display: block; height: 15px; background: #000; }
.sample-corner { display: block; height: 30px; margin: -7px 0 0 -3px; border-top: 2px solid #000; border-right: 2px solid #000; }
.effects { width: 176px; }
.fxrow { height: 42px; display: flex; align-items: center; justify-content: space-between; padding-right: 24px; }
.fx { font: italic 25px/30px "Open Sans", sans-serif; align-items: flex-end; }
.wraps { display: grid; grid-template-columns: 44px 44px; gap: 8px 10px; }
.wraps button { height: 44px; }
.ctl-right { margin-left: auto; display: flex; align-items: center; gap: 18px; padding-right: 16px; }
.ctl-menu { display: flex; flex-direction: column; gap: 28px; }

/* workspace */
.workspace { flex: 1; display: flex; border-bottom: 3px solid #030a0c; min-height: 0; }
.dock-head { height: 24px; background: var(--dark); border-bottom: 2px solid var(--edge); font-size: 24px; line-height: 16px; color: var(--icon); text-align: right; padding-right: 10px; }
.dock-head.left { text-align: left; padding: 0 0 0 10px; }
.hgrip { height: 20px; padding-top: 6px; display: flex; justify-content: center; }
.hgrip::before { content: ""; width: 38px; height: 8px; background: repeating-linear-gradient(90deg, var(--edge) 0 2px, transparent 2px 4px); }

.tools { width: 84px; border-left: 2px solid var(--edge); border-right: 4px solid var(--edge); border-bottom: 2px solid var(--edge); flex: none; }
.toollist { padding-top: 10px; }
.tool { width: 56px; height: 44px; margin: 0 10px 4px; border-radius: 5px; background: no-repeat; }
.tool svg { width: 56px; height: 44px; }
.tool.brk { margin-top: 10px; }
.tool.on { background-color: #1a2123; }
.tool.sub { background-image: linear-gradient(135deg, transparent 50%, #c6d2d0 50%); background-size: 7px 7px; background-position: 46px 35px; }
.mini { display: flex; justify-content: space-between; padding: 6px 12px 0 8px; }
.fillstroke { margin: 9px 0 0 9px; }
.format { display: flex; margin: 13px 10px 14px; gap: 6px; }
.format button { height: 26px; }
.format .on { width: 28px; border-radius: 4px; background: #1a2123; }
.format .serif { font: bold 26px/26px "Liberation Serif", serif; width: 20px; }
.tool.view { margin-top: 14px; }

.document { flex: 1; min-width: 0; display: flex; flex-direction: column; border-bottom: 2px solid var(--edge); border-right: 2px solid var(--edge); }
.tabs { height: 58px; display: flex; background: var(--dark); border-bottom: 2px solid var(--edge); flex: none; font-weight: 700; font-size: 22px; }
.tab { display: flex; align-items: center; justify-content: flex-end; padding-right: 30px; gap: 16px; border-right: 2px solid var(--edge); color: #8fa1a1; width: 430px; padding-top: 4px; }
.tab button { color: inherit; margin-top: -4px; }
.tab.active { background: var(--bar); color: var(--text); }
.tab.second { width: 594px; }

.stage { flex: 1; min-height: 0; display: grid; grid-template-columns: 32px 1fr 30px; grid-template-rows: 32px 1fr; }
.corner { background: linear-gradient(90deg, var(--tick) 50%, transparent 0) 0 8px / 4px 2px repeat-x, linear-gradient(var(--tick) 50%, transparent 0) 8px 0 / 2px 4px repeat-y, var(--ruler); border-right: 2px solid #455557; border-bottom: 2px solid #455557; }
.hruler { display: flex; overflow: hidden; padding-left: 20px; border-bottom: 2px solid #455557; color: #4f6266; font-size: 20px; line-height: 24px;
  background:
    linear-gradient(90deg, var(--tick) 1px, transparent 0) 20px 0 / 240px 30px repeat-x,
    linear-gradient(90deg, var(--tick) 1px, transparent 0) 20px 100% / 120px 12px repeat-x,
    linear-gradient(90deg, var(--tick) 1px, transparent 0) 20px 100% / 60px 8px repeat-x,
    linear-gradient(90deg, var(--tick) 1px, transparent 0) 20px 100% / 30px 4px repeat-x,
    var(--ruler); }
.hruler span { width: 240px; flex: none; padding-left: 4px; }
.vruler { overflow: hidden; padding-top: 165px; border-right: 2px solid #455557; color: #4f6266; font: 17px/20px "Liberation Sans", sans-serif; height: 0; min-height: 100%;
  background:
    linear-gradient(var(--tick) 1px, transparent 0) 0 165px / 30px 240px repeat-y,
    linear-gradient(var(--tick) 1px, transparent 0) 100% 165px / 12px 120px repeat-y,
    linear-gradient(var(--tick) 1px, transparent 0) 100% 165px / 8px 60px repeat-y,
    linear-gradient(var(--tick) 1px, transparent 0) 100% 165px / 4px 30px repeat-y,
    var(--ruler); }
.vruler span { display: block; height: 240px; padding: 2px 0 0 4px; }
.pasteboard { background: #abbcba; overflow: hidden; padding-left: 20px; }
.scroll { display: flex; flex-direction: column; justify-content: space-between; align-items: center; grid-column: 3; grid-row: 1 / 3; color: #445254; padding: 10px 0; }

.page { position: relative; width: 2040px; height: 1126px; background: #fff; border: 1px solid #26302f; border-top: 0; display: flex; flex-direction: column; justify-content: flex-end; }
.stripe { display: grid; grid-template-columns: repeat(4, 1fr); height: 11px; }
.c1 { background: #218bc9; } .c2 { background: #5cff00; } .c3 { background: #a529fb; } .c4 { background: #ff5527; }
.art { position: absolute; left: -1px; top: 0; }
.copy, .note { position: absolute; white-space: nowrap; }
.copy { color: #2897c6; font: 38px/40px "Inter", sans-serif; }
.title { font-size: 40px; font-weight: 500; left: 120px; top: 889px; }
.phone { font-size: 34px; left: 201px; top: 957px; }
.mail { left: 1069px; top: 883px; }
.site { left: 1069px; top: 933px; }
.note { font: 28px/50px "Lato", sans-serif; }
.note b { font-weight: 400; font-size: 38px; }
.n1 { color: #ff1a12; left: 808px; top: 800px; }
.n2 { color: #5cff00; left: 1429px; top: 942px; }

/* status bar */
.status { height: 32px; display: flex; align-items: center; flex: none; }
.status button { color: #6f8484; }
.first { margin-left: 24px; } .prev { margin-left: 26px; }
.status .pageno { margin-left: 24px; width: 182px; height: 32px; background: #455456; justify-content: space-between; padding: 0 10px 0 8px; color: #dbe4e3; }
.next { margin-left: 26px; } .last { margin-left: 28px; } .open { margin-left: 32px; }
.status .preflight { margin-left: 30px; width: 218px; justify-content: space-between; color: #dbe4e3; }
.status .checking { margin-left: 32px; width: 174px; color: #8fa1a1; font-size: 19px; }
.checking i { width: 20px; height: 20px; border-radius: 50%; background: #566a6a; margin-right: 12px; }
.checking svg { margin-left: auto; }
.status-end { margin-left: auto; display: flex; align-items: center; gap: 10px; padding-right: 4px; }
.status .status-end button { color: var(--icon); }

/* panel dock */
.panels { width: 332px; border-left: 2px solid var(--edge); border-right: 2px solid var(--edge); border-bottom: 2px solid var(--edge); margin-left: 2px; flex: none; }
.group { border-bottom: 2px solid var(--edge); padding-bottom: 4px; }
.group button { width: 100%; height: 56px; justify-content: flex-start; padding-left: 18px; gap: 14px; font-weight: 700; font-size: 21px; color: var(--text); }
.group svg { width: 42px; height: 40px; color: var(--icon); }
.fxglyph { width: 42px; text-align: center; font: italic 400 32px/40px "Open Sans", sans-serif; color: var(--icon); }
```
